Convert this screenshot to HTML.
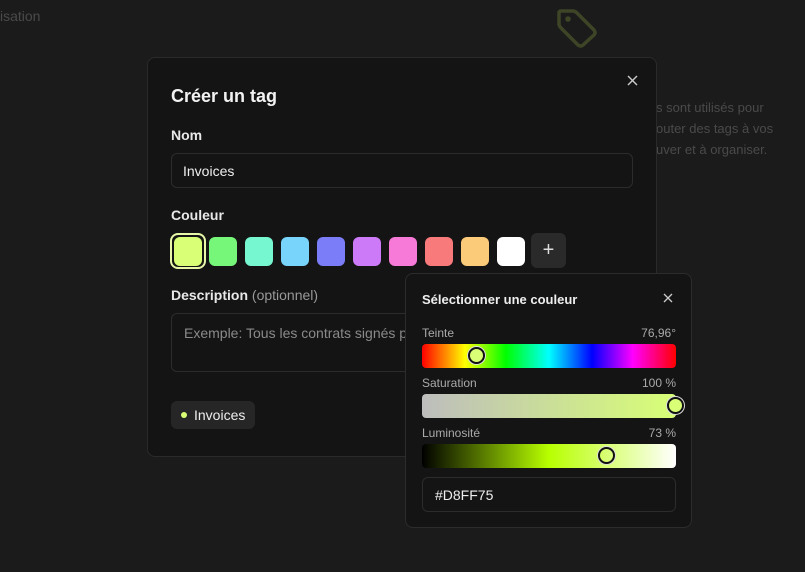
<!DOCTYPE html>
<html><head><meta charset="utf-8"><style>
*{box-sizing:border-box;margin:0;padding:0}
body{width:805px;height:572px;background:#1b1b1b;font-family:"Liberation Sans","DejaVu Sans",sans-serif;position:relative;overflow:hidden;color:#eee}
.abs{position:absolute}
.bgt{color:#4a4a4a;font-size:13px}
.modal{left:147px;top:57px;width:510px;height:400px;background:#141414;border:1px solid #2a2a2a;border-radius:8px}
.lbl{font-size:14px;font-weight:bold;color:#e8e8e8}
.sw{position:absolute;top:237px;width:28px;height:29px;border-radius:6px}
.pop{left:405px;top:273px;width:287px;height:255px;background:#141414;border:1px solid #2c2c2c;border-radius:8px}
.small{font-size:12px;color:#aaa}
.bar{position:absolute;left:422px;width:254px;height:24px;border-radius:4px}
.knob{position:absolute;width:17px;height:17px;border-radius:50%;border:2px solid #111;box-shadow:0 0 0 1px #ddd}
</style></head><body>
<div class="abs bgt" style="left:0;top:8px;font-size:14px">isation</div>
<svg class="abs" style="left:545px;top:0" width="65" height="55" viewBox="545 0 65 55"><path d="M561 11 L573 11 Q575 11 577 13 L594 30 Q596 33 594 35 L583 45 Q581 47 578 45 L561 28 Q559 26 559 24 L559 13 Q559 11 561 11 Z" fill="none" stroke="#3d4526" stroke-width="3.5" stroke-linejoin="round"/><circle cx="568" cy="19" r="2.8" fill="#3d4526"/></svg>
<div class="abs bgt" style="left:656px;top:97px;line-height:21px">s sont utilisés pour<br>outer des tags à vos<br>uver et à organiser.</div>
<div class="abs modal"></div>
<svg class="abs" style="left:627px;top:75px" width="11" height="11"><path d="M1 1L10 10M10 1L1 10" stroke="#ccc" stroke-width="1.4"/></svg>
<div class="abs" style="left:171px;top:86px;font-size:18px;font-weight:bold;color:#f2f2f2">Créer un tag</div>
<div class="abs lbl" style="left:171px;top:127px">Nom</div>
<div class="abs" style="left:171px;top:153px;width:462px;height:35px;border:1px solid #2c2c2c;border-radius:6px;padding:9px 11px;font-size:14px">Invoices</div>
<div class="abs lbl" style="left:171px;top:207px">Couleur</div>
<div class="abs" style="left:170px;top:233px;width:36px;height:36px;border:2px solid #e6f7a8;border-radius:8px"></div>
<div class="sw" style="left:174px;background:#d8ff75"></div>
<div class="sw" style="left:209px;background:#76f77a"></div>
<div class="sw" style="left:245px;background:#76f7cf"></div>
<div class="sw" style="left:281px;background:#78d4fa"></div>
<div class="sw" style="left:317px;background:#7a7cf8"></div>
<div class="sw" style="left:353px;background:#cc7af8"></div>
<div class="sw" style="left:389px;background:#f87ad8"></div>
<div class="sw" style="left:425px;background:#f87a7a"></div>
<div class="sw" style="left:461px;background:#fccb7a"></div>
<div class="sw" style="left:497px;background:#fff"></div>
<div class="abs" style="left:531px;top:233px;width:35px;height:35px;background:#2a2a2a;border-radius:6px;color:#ddd;font-size:20px;text-align:center;line-height:34px">+</div>
<div class="abs lbl" style="left:171px;top:287px">Description <span style="font-weight:normal;color:#999">(optionnel)</span></div>
<div class="abs" style="left:171px;top:313px;width:300px;height:59px;border:1px solid #2c2c2c;border-radius:6px;padding:11px 12px;font-size:14px;color:#8a8a8a;white-space:nowrap;overflow:hidden">Exemple: Tous les contrats signés p</div>
<div class="abs" style="left:171px;top:401px;width:84px;height:28px;background:#262626;border-radius:6px;font-size:14px;padding:6px 0 0 23px">Invoices</div>
<div class="abs" style="left:181px;top:412px;width:6px;height:6px;border-radius:50%;background:#d8ff75"></div>
<div class="abs pop"></div>
<div class="abs" style="left:422px;top:292px;font-size:13px;font-weight:bold;color:#eee">Sélectionner une couleur</div>
<svg class="abs" style="left:663px;top:293px" width="10" height="10"><path d="M1 1L9 9M9 1L1 9" stroke="#ccc" stroke-width="1.3"/></svg>
<div class="abs small" style="left:422px;top:326px">Teinte</div><div class="abs small" style="left:622px;top:326px;width:54px;text-align:right">76,96°</div>
<div class="bar" style="top:344px;background:linear-gradient(90deg,#f00,#ff0 17%,#0f0 33%,#0ff 50%,#00f 67%,#f0f 83%,#f00)"></div>
<div class="knob" style="left:468px;top:347px;background:#d8ff75"></div>
<div class="abs small" style="left:422px;top:376px">Saturation</div><div class="abs small" style="left:622px;top:376px;width:54px;text-align:right">100 %</div>
<div class="bar" style="top:394px;background:linear-gradient(90deg,#bdbdbd,#d8ff75)"></div>
<div class="knob" style="left:667px;top:397px;background:#d8ff75"></div>
<div class="abs small" style="left:422px;top:426px">Luminosité</div><div class="abs small" style="left:622px;top:426px;width:54px;text-align:right">73 %</div>
<div class="bar" style="top:444px;background:linear-gradient(90deg,#000,#b8ff00 50%,#fff)"></div>
<div class="knob" style="left:598px;top:447px;background:transparent"></div>
<div class="abs" style="left:422px;top:477px;width:254px;height:35px;border:1px solid #2c2c2c;border-radius:6px;padding:9px 12px;font-size:14px">#D8FF75</div>
</body></html>
